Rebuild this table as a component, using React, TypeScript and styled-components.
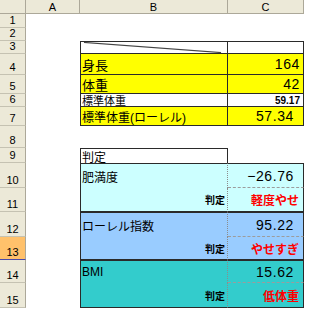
import styled, { createGlobalStyle } from "styled-components";

const GlobalStyle = createGlobalStyle`
  html, body {
    margin: 0;
    background: #fff;
  }
`;

const INK = "1px solid #2a2a2a";
const DOT = "1px dotted #8c8c8c";
const DASH = "1px dashed #9c9c9c";

const YELLOW = "#ffff00";
const CYAN = "#ccffff";
const SKY = "#99ccff";
const TEAL = "#33cccc";

const Sheet = styled.div`
  display: grid;
  grid-template-columns: 26px 54px 148px 76px;
  grid-template-rows: 14px 14px 13px 13px 21px 19px 13px 19px 22px 15px 25px 24px 25px 23px 23px 25px;
  width: 304px;
  font-family: "Liberation Sans", "Noto Sans CJK JP", sans-serif;
  color: #000;
`;

const Corner = styled.div`
  grid-column: 1;
  grid-row: 1;
  background: #ece9d8;
  border-right: 1px solid #aca899;
  border-bottom: 1px solid #aca899;
`;

const ColHead = styled.div<{ $c: number }>`
  grid-column: ${p => p.$c};
  grid-row: 1;
  display: flex;
  align-items: center;
  justify-content: center;
  background: #ece9d8;
  border-right: 1px solid #aca899;
  border-bottom: 1px solid #aca899;
  font-size: 11px;
`;

const RowHead = styled.div<{ $r: number; $active?: boolean }>`
  grid-column: 1;
  grid-row: ${p => p.$r + 1};
  display: flex;
  align-items: flex-end;
  justify-content: center;
  padding-bottom: 1px;
  background: ${p => (p.$active ? "#ffc16b" : "#ece9d8")};
  border-right: 1px solid #aca899;
  border-bottom: 1px solid ${p => (p.$active ? "#4a4aa8" : "#c5c2b2")};
  font-size: 11px;
`;

type Edges = { $t?: string; $rt?: string; $b?: string; $l?: string };

const Cell = styled.div<
  Edges & {
    $c: number;
    $r: string;
    $bg?: string;
    $right?: boolean;
    $size?: number;
    $bold?: boolean;
    $color?: string;
    $pad?: number;
  }
>`
  grid-column: ${p => p.$c};
  grid-row: ${p => p.$r};
  position: relative;
  display: flex;
  align-items: center;
  justify-content: ${p => (p.$right ? "flex-end" : "flex-start")};
  padding: 0 ${p => p.$pad ?? 2}px 0 1px;
  background: ${p => p.$bg ?? "transparent"};
  border-top: ${p => p.$t ?? "none"};
  border-right: ${p => p.$rt ?? "none"};
  border-bottom: ${p => p.$b ?? "none"};
  border-left: ${p => p.$l ?? "none"};
  font-size: ${p => p.$size ?? 12}px;
  font-weight: ${p => (p.$bold ? 700 : 400)};
  color: ${p => p.$color ?? "#000"};
  white-space: nowrap;
  overflow: hidden;
`;

// large figures in the value column
const Figure = styled.span`
  font-size: 14px;
  letter-spacing: 0.6px;
`;

const Diagonal = styled.svg`
  position: absolute;
  inset: 0;
  width: 100%;
  height: 100%;
`;

const rows = Array.from({ length: 15 }, (_, i) => i + 1);

// each judged metric takes two sheet rows: value on top, verdict below
const metrics = [
  { row: 10, label: "肥満度", value: "−26.76", verdict: "軽度やせ", bg: CYAN },
  { row: 12, label: "ローレル指数", value: "95.22", verdict: "やせすぎ", bg: SKY },
  { row: 14, label: "BMI", value: "15.62", verdict: "低体重", bg: TEAL },
];

const at = (row: number) => `${row + 1}`;

export default function App() {
  return (
    <>
      <GlobalStyle />
      <Sheet>
        <Corner />
        <ColHead $c={2}>A</ColHead>
        <ColHead $c={3}>B</ColHead>
        <ColHead $c={4}>C</ColHead>
        {rows.map(r => (
          <RowHead key={r} $r={r} $active={r === 13}>
            {r}
          </RowHead>
        ))}

        <Cell $c={3} $r={at(3)} $t={INK} $l={INK} $rt={INK} $b={INK}>
          <Diagonal viewBox="0 0 148 13" preserveAspectRatio="none">
            <line x1="3" y1="0.5" x2="142" y2="12.5" stroke="#444" strokeWidth="1.4" />
          </Diagonal>
        </Cell>
        <Cell $c={4} $r={at(3)} $t={INK} $rt={INK} $b={INK} />

        <Cell $c={3} $r={at(4)} $bg={YELLOW} $l={INK} $rt={INK} $b={INK} $size={13}>
          身長
        </Cell>
        <Cell $c={4} $r={at(4)} $bg={YELLOW} $rt={INK} $b={INK} $right $pad={3}>
          <Figure>164</Figure>
        </Cell>

        <Cell $c={3} $r={at(5)} $bg={YELLOW} $l={INK} $rt={INK} $b={INK} $size={13}>
          体重
        </Cell>
        <Cell $c={4} $r={at(5)} $bg={YELLOW} $rt={INK} $b={INK} $right $pad={3}>
          <Figure>42</Figure>
        </Cell>

        <Cell $c={3} $r={at(6)} $l={INK} $rt={INK} $b={INK} $size={11}>
          標準体重
        </Cell>
        <Cell $c={4} $r={at(6)} $rt={INK} $b={INK} $right $size={10} $bold $pad={3}>
          59.17
        </Cell>

        <Cell $c={3} $r={at(7)} $bg={YELLOW} $l={INK} $rt={INK} $b={INK} $size={12}>
          標準体重(ローレル)
        </Cell>
        <Cell $c={4} $r={at(7)} $bg={YELLOW} $rt={INK} $b={INK} $right $pad={9}>
          <Figure>57.34</Figure>
        </Cell>

        <Cell $c={3} $r={at(9)} $t={INK} $l={INK} $rt={INK}>
          判定
        </Cell>

        {metrics.map(m => [
          <Cell key={`${m.row}l`} $c={3} $r={at(m.row)} $bg={m.bg} $t={INK} $l={INK} $rt={DOT}>
            {m.label}
          </Cell>,
          <Cell
            key={`${m.row}v`}
            $c={4}
            $r={at(m.row)}
            $bg={m.bg}
            $t={INK}
            $rt={INK}
            $b={DASH}
            $right
            $pad={9}
          >
            <Figure>{m.value}</Figure>
          </Cell>,
          <Cell
            key={`${m.row}j`}
            $c={3}
            $r={at(m.row + 1)}
            $bg={m.bg}
            $l={INK}
            $rt={DOT}
            $b={INK}
            $right
            $size={10}
            $bold
            $pad={2}
          >
            判定
          </Cell>,
          <Cell
            key={`${m.row}r`}
            $c={4}
            $r={at(m.row + 1)}
            $bg={m.bg}
            $rt={INK}
            $b={INK}
            $right
            $size={12}
            $bold
            $color="#ff0000"
            $pad={4}
          >
            {m.verdict}
          </Cell>,
        ])}
      </Sheet>
    </>
  );
}
